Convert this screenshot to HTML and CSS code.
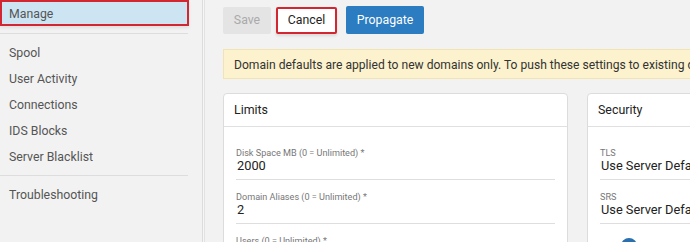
FILE: index.html
```html
<!DOCTYPE html>
<html lang="en">
<head>
    <meta charset="UTF-8">
    <meta name="viewport" content="width=device-width, initial-scale=1.0">
    <title>Domain Defaults</title>
    <link rel="stylesheet" href="styles.css">
</head>
<body>
    <div class="layout">
        <!-- Menu lateral -->
        <nav class="sidebar">
            <div class="nav-item nav-active">Manage</div>
            <div class="nav-sep"></div>
            <div class="nav-item">Spool</div>
            <div class="nav-item">User Activity</div>
            <div class="nav-item">Connections</div>
            <div class="nav-item">IDS Blocks</div>
            <div class="nav-item">Server Blacklist</div>
            <div class="nav-sep nav-sep-low"></div>
            <div class="nav-item">Troubleshooting</div>
        </nav>

        <main class="main">
            <div class="toolbar">
                <button class="btn btn-disabled">Save</button>
                <button class="btn btn-default btn-marked">Cancel</button>
                <button class="btn btn-primary">Propagate</button>
            </div>

            <div class="notice">Domain defaults are applied to new domains only. To push these settings to existing domains, click Propagate.</div>

            <div class="cards">
                <!-- Tarjeta: Limits -->
                <div class="card">
                    <div class="card-header">Limits</div>
                    <div class="card-body">
                        <div class="field">
                            <span class="field-label">Disk Space MB (0 = Unlimited) *</span>
                            <span class="field-value">2000</span>
                        </div>
                        <div class="field">
                            <span class="field-label">Domain Aliases (0 = Unlimited) *</span>
                            <span class="field-value">2</span>
                        </div>
                        <div class="field">
                            <span class="field-label">Users (0 = Unlimited) *</span>
                            <span class="field-value">100</span>
                        </div>
                    </div>
                </div>

                <!-- Tarjeta: Security -->
                <div class="card">
                    <div class="card-header">Security</div>
                    <div class="card-body">
                        <div class="field">
                            <span class="field-label">TLS</span>
                            <span class="field-value">Use Server Default</span>
                        </div>
                        <div class="field">
                            <span class="field-label">SRS</span>
                            <span class="field-value">Use Server Default</span>
                        </div>
                        <div class="toggle-row">
                            <span class="toggle-dot"></span>
                        </div>
                    </div>
                </div>
            </div>
        </main>
    </div>
</body>
</html>
```

FILE: styles.css
```css
html, body {
    margin: 0;
    height: 100%;
    overflow: hidden;
}

body {
    background: #f2f2f2;
    font-family: Roboto, "Liberation Sans", sans-serif;
    color: #333;
}

.layout {
    display: flex;
    height: 100%;
}

.sidebar {
    width: 203px;
    flex-shrink: 0;
    background: #f2f2f2;
    border-right: 1px solid #dcdcdc;
    box-shadow: 1px 0 0 #f6f6f6, 2px 0 0 #e2e2e2;
    padding-right: 14px;
    box-sizing: border-box;
}

.nav-item {
    height: 26px;
    line-height: 26px;
    padding-left: 9px;
    font-size: 12.3px;
    color: #555;
}

.nav-active {
    height: 26px;
    line-height: 24px;
    margin-right: -1px;
    background: #cde5f3;
    border: 2px solid #d22630;
    box-sizing: border-box;
    padding-left: 7px;
    box-shadow: 0 2px 3px rgba(0, 0, 0, 0.08);
}

.nav-sep {
    height: 1px;
    background: #dddddd;
    margin: 7px 0 6px;
}

.nav-sep-low {
    margin: 5px 0 6px;
}

.main {
    flex: 1;
    min-width: 0;
    padding: 6px 0 0 20px;
}

.toolbar {
    display: flex;
    align-items: center;
    gap: 5px;
}

.btn {
    font-family: inherit;
    font-size: 12.3px;
    height: 27px;
    padding: 0;
    border: 1px solid transparent;
    border-radius: 2px;
    cursor: pointer;
}

.btn-disabled {
    width: 48px;
    background: #e4e4e4;
    color: #aaa;
}

.btn-default {
    width: 61px;
    background: #fff;
    color: #222;
}

.btn-marked {
    border: 2px solid #d22630;
    box-shadow: 0 2px 3px rgba(0, 0, 0, 0.1);
}

.btn-primary {
    width: 78px;
    height: 28px;
    margin-left: 4px;
    background: #2b7cc0;
    color: #fff;
    font-size: 12.3px;
}

.notice {
    margin-top: 15px;
    height: 30px;
    line-height: 30px;
    padding-left: 10px;
    background: #fcf2cd;
    border: 1px solid #f2e4b2;
    border-right: none;
    box-sizing: border-box;
    white-space: nowrap;
    font-size: 12.1px;
    color: #333;
}

.cards {
    display: flex;
    gap: 19px;
    margin-top: 14px;
}

.card {
    width: 345px;
    flex-shrink: 0;
    background: #fff;
    border: 1px solid #dcdcdc;
    border-radius: 4px;
    box-sizing: border-box;
    height: 220px;
}

.card-header {
    height: 33px;
    line-height: 32px;
    padding-left: 10px;
    font-size: 12.4px;
    color: #222;
    border-bottom: 1px solid #e0e0e0;
    box-sizing: border-box;
}

.card-body {
    padding: 20px 12px 0 12px;
}

.field {
    display: flex;
    flex-direction: column;
    padding-bottom: 6px;
    margin-bottom: 11px;
    border-bottom: 1px solid #dedede;
}

.field-label {
    font-size: 9.1px;
    line-height: 12px;
    color: #777;
}

.field-value {
    font-size: 12.8px;
    line-height: 14px;
    padding-left: 1px;
    color: #222;
    white-space: nowrap;
}

.toggle-row {
    padding: 3px 0 0 21px;
}

.toggle-dot {
    display: block;
    width: 16px;
    height: 16px;
    border-radius: 50%;
    background: #2b6fae;
}
```
